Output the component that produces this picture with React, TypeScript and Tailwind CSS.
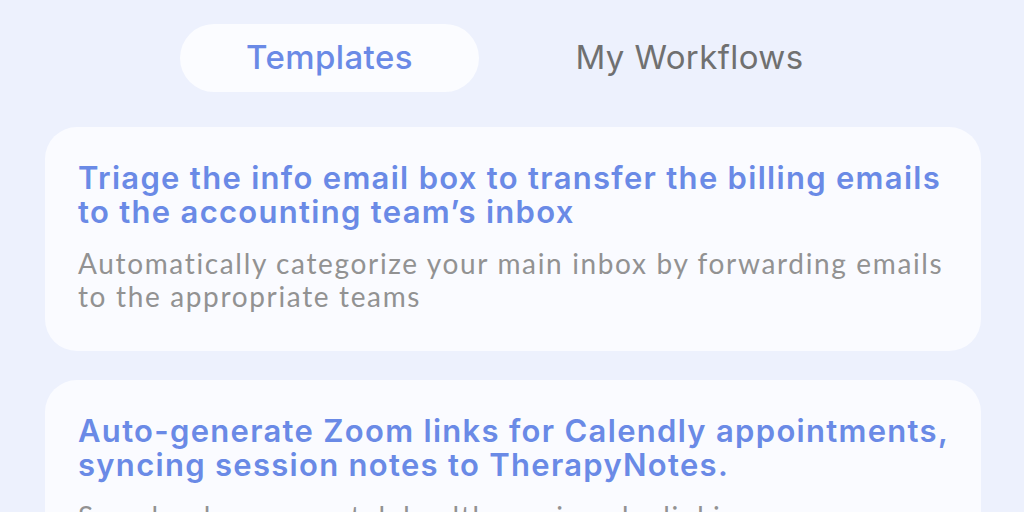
import React from "react";

const cards = [
  {
    title: "Triage the info email box to transfer the billing emails to the accounting team’s inbox",
    desc: "Automatically categorize your main inbox by forwarding emails to the appropriate teams",
  },
  {
    title: "Auto-generate Zoom links for Calendly appointments, syncing session notes to TherapyNotes.",
    desc: "Seamlessly manage telehealth sessions by linking your scheduling, video and notes tools",
  },
];

export default function App() {
  return (
    <div className="w-[1024px] h-[512px] overflow-hidden bg-[#edf1fd] flex flex-col">
      <div className="flex gap-[61px] pt-[24px] pl-[180px]">
        <div className="w-[299px] h-[68px] rounded-full bg-[#fbfcff] flex items-center justify-center">
          <span className="text-[33px] tracking-[0.4px] font-medium text-[#6a8ae6]" style={{ fontFamily: "Inter, 'Noto Sans', sans-serif" }}>
            Templates
          </span>
        </div>
        <div className="w-[299px] h-[68px] flex items-center justify-center">
          <span className="text-[33px] tracking-[0.4px] text-[#707070]" style={{ fontFamily: "Inter, 'Noto Sans', sans-serif" }}>
            My Workflows
          </span>
        </div>
      </div>
      <div className="flex flex-col gap-[29px] pt-[35px] pl-[45px] pr-[43px]">
        {cards.map((c, i) => (
          <div key={i} className="rounded-[32px] bg-[#fafbff] pl-[33px] pr-[30px] pt-[34px] pb-[38px]">
            <div className="text-[31px] leading-[34px] tracking-[1.3px] font-semibold text-[#6a8ae6]" style={{ fontFamily: "Inter, 'Noto Sans', sans-serif" }}>
              {c.title}
            </div>
            <div className="mt-[18px] text-[28px] leading-[33px] tracking-[1.65px] text-[#929292]" style={{ fontFamily: "Lato, 'Noto Sans', sans-serif" }}>
              {c.desc}
            </div>
          </div>
        ))}
      </div>
    </div>
  );
}
